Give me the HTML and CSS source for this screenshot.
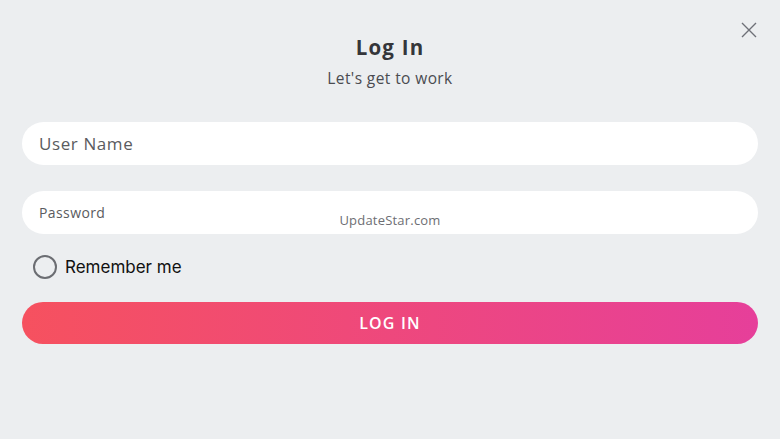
FILE: index.html
```html
<!DOCTYPE html>
<html>
	<head>
		<meta charset="UTF-8">
		<title>Log In</title>
		<link rel="stylesheet" href="styles.css">
	</head>
	<body>
		<div class="box">
			<a class="close" href="#">
				<svg width="16" height="16" viewBox="0 0 16 16"><path d="M1 1L15 15M15 1L1 15" stroke="#6e7078" stroke-width="1.4" fill="none"/></svg>
			</a>
			<h1 class="title">Log In</h1>
			<p class="sub">Let's get to work</p>
			<div class="field"><span class="ph big">User Name</span></div>
			<div class="field pass"><span class="ph">Password</span></div>
			<label class="remember"><span class="radio"></span>Remember me</label>
			<div class="btn">LOG IN</div>
			<p class="mark">UpdateStar.com</p>
		</div>
	</body>
</html>
```
FILE: styles.css
```css
html,body{
	margin: 0;
	padding: 0;
	background: #eceef0;
}
.box{
	width: 780px;
	height: 439px;
	padding: 0 22px;
	box-sizing: border-box;
	position: relative;
	font-family: "Open Sans", "DejaVu Sans", sans-serif;
}
.close{
	position: absolute;
	right: 23px;
	top: 22px;
	width: 16px;
	height: 16px;
}
.close svg{
	display: block;
}
.title{
	margin: 0;
	padding-top: 33px;
	text-align: center;
	font-size: 20.5px;
	line-height: 28px;
	font-weight: 700;
	color: #35363a;
	letter-spacing: 1.2px;
}
.sub{
	margin: 7px 0 0;
	text-align: center;
	font-size: 15.5px;
	line-height: 20px;
	color: #4a4b50;
	letter-spacing: 0.4px;
}
.field{
	height: 43px;
	background: #fff;
	border-radius: 22px;
	margin-top: 34px;
	display: flex;
	align-items: center;
	padding-left: 17px;
}
.field.pass{
	margin-top: 26px;
}
.ph{
	color: #5a5b60;
	font-size: 14px;
	letter-spacing: 0.4px;
}
.ph.big{
	font-size: 17px;
	letter-spacing: 0.6px;
}
.remember{
	display: flex;
	align-items: center;
	height: 44px;
	margin-top: 11px;
	padding-left: 11px;
	font-family: Inter, Roboto, sans-serif;
	font-size: 17px;
	color: #111;
}
.radio{
	width: 20px;
	height: 20px;
	border: 2px solid #6b6d72;
	border-radius: 50%;
	margin-right: 8px;
}
.btn{
	margin-top: 13px;
	height: 42px;
	border-radius: 21px;
	background: linear-gradient(90deg, #f6515f, #e63f9a);
	color: #fff;
	font-size: 16px;
	font-weight: 600;
	display: flex;
	align-items: center;
	justify-content: center;
	letter-spacing: 1.2px;
}
.mark{
	position: absolute;
	left: 0;
	right: 0;
	top: 211px;
	margin: 0;
	text-align: center;
	font-size: 13px;
	color: #6d6e73;
	letter-spacing: 0.2px;
}
```
